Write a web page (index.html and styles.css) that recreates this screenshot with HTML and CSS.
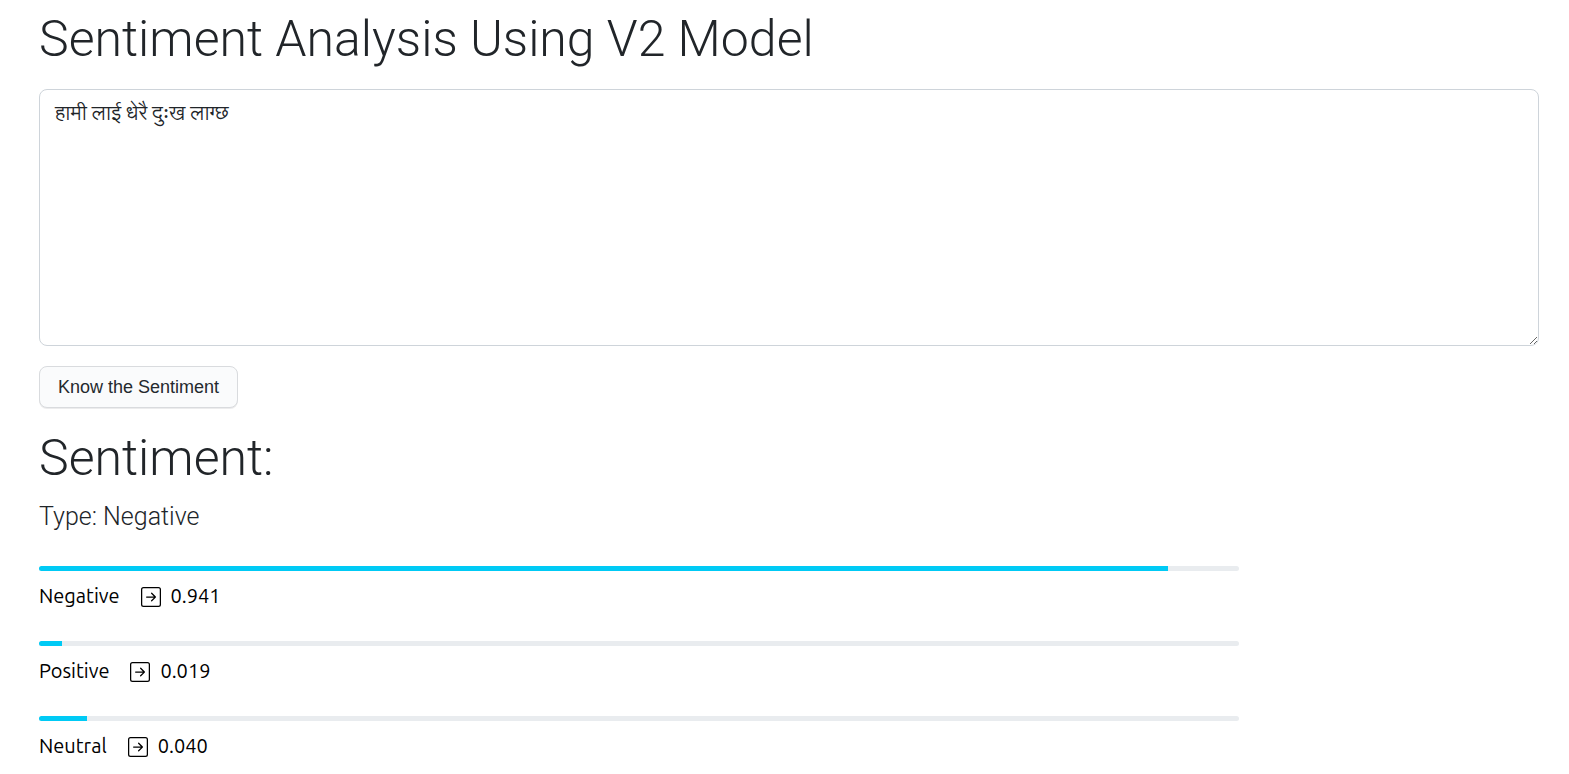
FILE: index.html
```
<!DOCTYPE html>
<html lang="en">
<head>
<meta charset="utf-8">
<title>Sentiment Analysis</title>
<link rel="stylesheet" href="styles.css">
</head>
<body>
<main class="page">
  <form class="form">
    <h1 class="title"><label for="text">Sentiment Analysis Using V2 Model</label></h1>
    <textarea class="input" id="text">हामी लाई धेरै दुःख लाग्छ</textarea>
    <button class="submit" type="button">Know the Sentiment</button>
  </form>
  <section class="results">
    <h2 class="title">Sentiment:</h2>
    <p class="type">Type: Negative</p>
    <ul class="scores">
      <li class="score">
        <div class="track"><div class="bar" style="width: 94.1%"></div></div>
        <p class="label"><span>Negative</span>
          <svg class="icon" viewBox="0 0 16 16" aria-hidden="true"><use href="#arrow"/></svg><span>0.941</span></p>
      </li>
      <li class="score">
        <div class="track"><div class="bar" style="width: 1.9%"></div></div>
        <p class="label"><span>Positive</span>
          <svg class="icon" viewBox="0 0 16 16" aria-hidden="true"><use href="#arrow"/></svg><span>0.019</span></p>
      </li>
      <li class="score">
        <div class="track"><div class="bar" style="width: 4%"></div></div>
        <p class="label"><span>Neutral</span>
          <svg class="icon" viewBox="0 0 16 16" aria-hidden="true"><use href="#arrow"/></svg><span>0.040</span></p>
      </li>
    </ul>
  </section>
</main>
<svg class="symbols" aria-hidden="true">
  <symbol id="arrow" viewBox="0 0 16 16">
    <path fill-rule="evenodd" d="M15 2a1 1 0 0 0-1-1H2a1 1 0 0 0-1 1v12a1 1 0 0 0 1 1h12a1 1 0 0 0 1-1V2zM0 2a2 2 0 0 1 2-2h12a2 2 0 0 1 2 2v12a2 2 0 0 1-2 2H2a2 2 0 0 1-2-2V2zm4.500 5.500a.5.5 0 0 0 0 1h5.793l-2.147 2.146a.5.5 0 0 0 .708.708l3-3a.5.5 0 0 0 0-.708l-3-3a.5.5 0 1 0-.708.708L10.293 7.500H4.500z"/>
  </symbol>
</svg>
</body>
</html>
```
FILE: styles.css
```
* { box-sizing: border-box; }
body { margin: 0; background: #fff; color: #212529; font-family: Roboto, sans-serif; }
.page { padding: 9px 30px 0 39px; }
.form { display: flex; flex-direction: column; align-items: flex-start; }
.title { margin: 0; font-size: 50px; font-weight: 300; line-height: 60px; }
.input {
  width: 100%; height: 257px; margin: 20px 0; padding: 8px 15px;
  border: 1px solid #ced4da; border-radius: 8px; resize: vertical;
  background: #fff; color: #212529;
  font: 300 20px/30px Roboto, "Lohit Devanagari", "Noto Sans Devanagari", "Noto Sans", sans-serif;
}
.submit {
  height: 42px; padding: 0 18px; border: 1px solid #d9dbde; border-radius: 8px;
  background: #fafbfc; color: #24292e; box-shadow: 0 1px 0 #ececed;
  font: 18px/25px "Liberation Sans", Arial, sans-serif;
}
.results { padding-top: 20px; }
.type { margin: 10px 0 0; font-size: 25px; font-weight: 300; line-height: 38px; }
.scores { list-style: none; margin: 0; padding: 30px 0 0; }
.score { height: 75px; }
.track { width: 80%; height: 5px; border-radius: 3px; overflow: hidden; background: #e9ecef; }
.bar { height: 100%; background: #00caf5; }
.label {
  display: flex; align-items: center; margin: 10px 0 0; color: #000;
  font: 400 20px/30px Ubuntu, "Noto Sans", sans-serif;
}
.icon { width: 20px; height: 20px; margin: 2px 10px 0 21px; fill: currentColor; }
.symbols { position: absolute; width: 0; height: 0; }
```
